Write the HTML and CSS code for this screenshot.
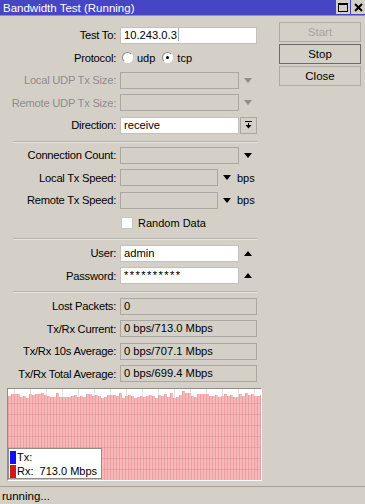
FILE: index.html
```html
<!DOCTYPE html>
<html lang="en">
<head>
	<meta charset="UTF-8">
	<title>Bandwidth Test</title>
	<link rel="stylesheet" href="styles.css">
</head>
<body>
	<div class="window">
		<div class="titlebar">
			<span class="title">Bandwidth Test (Running)</span>
			<span class="tb-btn"><span class="max-icon"></span></span>
			<span class="tb-btn">
				<svg width="9" height="9" viewBox="0 0 9 9"><path d="M1 1L8 8M8 1L1 8" stroke="#000" stroke-width="2"/></svg>
			</span>
		</div>
		<div class="main">
			<div class="form">
				<!-- target -->
				<div class="group">
					<div class="row">
						<label>Test To:</label>
						<div class="ctl"><div class="field white w137">10.243.0.3<span class="caret"></span></div></div>
					</div>
					<div class="row">
						<label>Protocol:</label>
						<div class="ctl">
							<span class="radio"></span><span class="opt">udp</span>
							<span class="radio on"></span><span class="opt">tcp</span>
						</div>
					</div>
					<div class="row off">
						<label>Local UDP Tx Size:</label>
						<div class="ctl"><div class="field w119"></div><span class="tri-down off"></span></div>
					</div>
					<div class="row off">
						<label>Remote UDP Tx Size:</label>
						<div class="ctl"><div class="field w119"></div><span class="tri-down off"></span></div>
					</div>
					<div class="row">
						<label>Direction:</label>
						<div class="ctl">
							<div class="field white w119">receive</div>
							<span class="dbtn">
								<svg width="7" height="8" viewBox="0 0 7 8"><rect x="0" y="0" width="7" height="1" fill="#000"/><rect x="3" y="2" width="1" height="2" fill="#000"/><polygon points="0.5,4 6.5,4 3.5,7.5" fill="#000"/></svg>
							</span>
						</div>
					</div>
				</div>
				<div class="sep"></div>
				<!-- speed -->
				<div class="group">
					<div class="row">
						<label>Connection Count:</label>
						<div class="ctl"><div class="field w119"></div><span class="tri-down"></span></div>
					</div>
					<div class="row">
						<label>Local Tx Speed:</label>
						<div class="ctl"><div class="field w98"></div><span class="tri-down"></span><span class="unit">bps</span></div>
					</div>
					<div class="row">
						<label>Remote Tx Speed:</label>
						<div class="ctl"><div class="field w98"></div><span class="tri-down"></span><span class="unit">bps</span></div>
					</div>
					<div class="row">
						<label></label>
						<div class="ctl"><span class="check"></span><span class="opt">Random Data</span></div>
					</div>
				</div>
				<div class="sep sep2"></div>
				<!-- auth -->
				<div class="group">
					<div class="row">
						<label>User:</label>
						<div class="ctl"><div class="field white w119">admin</div><span class="tri-up"></span></div>
					</div>
					<div class="row">
						<label>Password:</label>
						<div class="ctl"><div class="field white w119 pwd">**********</div><span class="tri-up"></span></div>
					</div>
				</div>
				<div class="sep sep2"></div>
				<!-- results -->
				<div class="group">
					<div class="row">
						<label>Lost Packets:</label>
						<div class="ctl"><div class="field w137">0</div></div>
					</div>
					<div class="row">
						<label>Tx/Rx Current:</label>
						<div class="ctl"><div class="field w137">0 bps/713.0 Mbps</div></div>
					</div>
					<div class="row">
						<label>Tx/Rx 10s Average:</label>
						<div class="ctl"><div class="field w137">0 bps/707.1 Mbps</div></div>
					</div>
					<div class="row">
						<label>Tx/Rx Total Average:</label>
						<div class="ctl"><div class="field w137">0 bps/699.4 Mbps</div></div>
					</div>
				</div>
				<div class="graph">
					<svg class="chart" width="253" height="91" viewBox="0 0 253 91"></svg>
					<div class="legend">
						<div class="leg-row"><span class="sw tx"></span>Tx:</div>
						<div class="leg-row"><span class="sw rx"></span>Rx:&nbsp; 713.0 Mbps</div>
					</div>
				</div>
			</div>
			<div class="side">
				<div class="btn off">Start</div>
				<div class="btn def">Stop</div>
				<div class="btn">Close</div>
			</div>
		</div>
		<div class="status">running...</div>
	</div>
	<script src="script.js"></script>
</body>
</html>
```

FILE: styles.css
```css
*{
	margin:0;
	padding:0;
	box-sizing:border-box;
}
body{
	background:#d4d0c8;
	font-family:"Liberation Sans",Arial,sans-serif;
	font-size:11px;
	color:#000;
}
.window{
	width:365px;
	height:504px;
	display:flex;
	flex-direction:column;
}
/*---------------- title bar ----------------*/
.titlebar{
	height:16px;
	background:#4646c4;
	color:#fff;
	display:flex;
	align-items:flex-start;
	padding-left:3px;
	font-size:11.5px;
	line-height:16px;
	border-bottom:1px solid #8a8ad8;
}
.title{
	flex:1;
}
.tb-btn{
	width:14px;
	height:14px;
	margin-left:1px;
	background:#d4d0c8;
	display:flex;
	align-items:center;
	justify-content:center;
}
.max-icon{
	width:10px;
	height:9px;
	border:1px solid #000;
	border-top-width:2px;
}
/*---------------- form ----------------*/
.main{
	flex:1;
	display:flex;
}
.form{
	width:263px;
	padding-top:8px;
}
.row{
	display:grid;
	grid-template-columns:116px auto;
	column-gap:4px;
	height:22.5px;
	align-items:center;
}
.row label{
	text-align:right;
	white-space:nowrap;
	font-size:11.2px;
	letter-spacing:-0.25px;
}
.row.off label{
	color:#8d8d8d;
}
.ctl{
	display:flex;
	align-items:center;
}
.field{
	height:17px;
	border:1px solid #a9a7a2;
	padding-left:3px;
	line-height:15px;
	white-space:nowrap;
	font-size:11.2px;
}
.field.white{
	background:#fff;
	border-color:#c2c0bb;
}
.w137{width:137px;}
.w119{width:119px;}
.w98{width:98px;}
.caret{
	display:inline-block;
	width:1px;
	height:13px;
	background:#aaa;
	vertical-align:-2px;
	margin-left:1px;
}
.pwd{
	letter-spacing:1.4px;
}
.tri-down{
	width:0;
	height:0;
	border-left:4.5px solid transparent;
	border-right:4.5px solid transparent;
	border-top:5px solid #000;
	margin-left:5px;
}
.tri-down.off{
	border-top-color:#8d8d8d;
}
.tri-up{
	width:0;
	height:0;
	border-left:4.5px solid transparent;
	border-right:4.5px solid transparent;
	border-bottom:5px solid #000;
	margin-left:5px;
}
.unit{
	margin-left:6px;
}
.dbtn{
	width:17px;
	height:17px;
	margin-left:1px;
	border:1px solid #a9a7a2;
	display:flex;
	align-items:center;
	justify-content:center;
}
.radio{
	width:11px;
	height:11px;
	border-radius:50%;
	background:#fff;
	border:1px solid;
	border-color:#8a8a8a #fff #fff #8a8a8a;
	margin-left:2px;
	display:flex;
	align-items:center;
	justify-content:center;
}
.radio.on{
	margin-left:7px;
}
.radio.on::after{
	content:"";
	width:3px;
	height:3px;
	background:#000;
	border-radius:50%;
}
.opt{
	margin-left:4px;
}
.check{
	width:12px;
	height:12px;
	margin-left:1px;
	background:#fff;
	border:1px solid #c8c6c1;
}
.check + .opt{
	margin-left:5px;
}
.sep{
	margin:4px 0 1.5px 13px;
	width:244px;
	border-top:1px solid #b7b4ad;
	border-bottom:1px solid #e6e4df;
}
.sep2{
	margin-top:3.5px;
	margin-bottom:2.5px;
}
/*---------------- graph ----------------*/
.graph{
	position:relative;
	margin:3px 0 0 7px;
	width:255px;
	height:93px;
	background:#fff;
	border:1px solid;
	border-color:#8f8d88 #fff #fff #8f8d88;
}
.chart{
	display:block;
}
.legend{
	position:absolute;
	left:0;
	bottom:1px;
	width:94px;
	height:31px;
	background:#fff;
	border:1px solid #8f8d88;
	padding:1px;
}
.leg-row{
	height:14px;
	display:flex;
	align-items:center;
	white-space:nowrap;
	font-size:11px;
}
.sw{
	width:6px;
	height:13px;
	margin-right:1px;
	flex:none;
}
.sw.tx{background:#1010f0;}
.sw.rx{background:#d01818;}
/*---------------- buttons ----------------*/
.side{
	margin-left:16px;
	width:82px;
	padding-top:6px;
	display:flex;
	flex-direction:column;
	gap:2px;
}
.btn{
	height:20px;
	border:1px solid #aeaba5;
	text-align:center;
	line-height:18px;
	font-size:11.5px;
}
.btn.off{
	color:#a5a39f;
}
.btn.def{
	border-color:#6d6b67;
}
/*---------------- status ----------------*/
.status{
	height:18px;
	border-top:1px solid #a5a29b;
	padding-left:2px;
	line-height:18px;
	font-size:11.5px;
}
```

FILE: script.js
```js
// draw the rx bars of the graph
var chart = document.querySelector(".chart");
var ns = "http://www.w3.org/2000/svg";
var w = 253, h = 91;
var seed = 11;
function rnd(){
	seed = (seed * 9301 + 49297) % 233280;
	return seed / 233280;
}
function rect(x, y, rw, rh, fill){
	var r = document.createElementNS(ns, "rect");
	r.setAttribute("x", x);
	r.setAttribute("y", y);
	r.setAttribute("width", rw);
	r.setAttribute("height", rh);
	r.setAttribute("fill", fill);
	chart.appendChild(r);
}
// faint grid in the empty top part
for(var gx = 6; gx < w; gx += 16){
	rect(gx, 0, 1, 12, "#e4e4e4");
}
for(var x = 0; x < w; x += 3){
	var barTop = 4 + Math.round(rnd() * 5);
	if(rnd() > 0.93) barTop = 2;
	rect(x, barTop, 3, h - barTop, "#f6b8b8");
	rect(x, barTop, 1, h - barTop, "#ec9f9f");
}
// horizontal grid lines
for(var gy = 14; gy < h; gy += 11){
	rect(0, gy, w, 1, "rgba(200,70,70,0.18)");
}
```
